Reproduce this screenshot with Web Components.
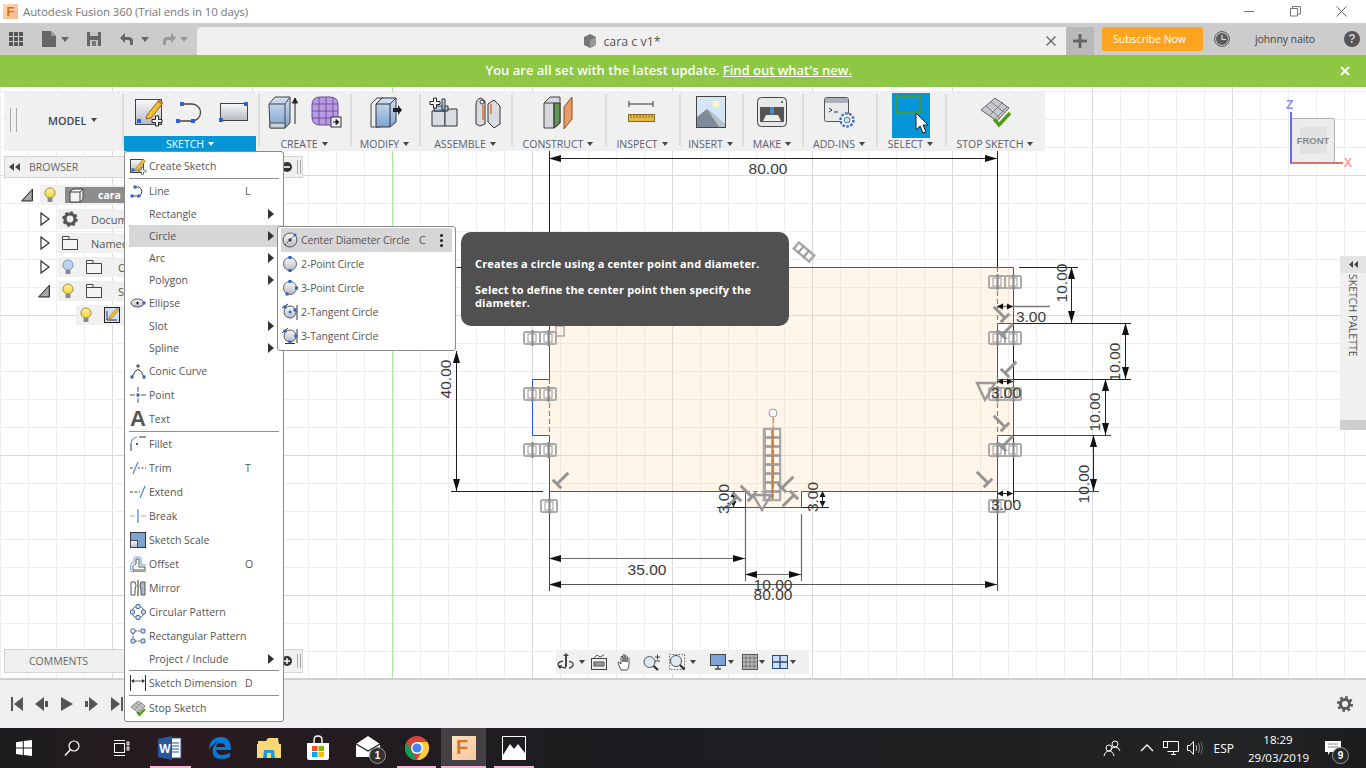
<!DOCTYPE html>
<html lang="en">
<head>
<meta charset="utf-8">
<title>Autodesk Fusion 360</title>
<style>
  html, body { margin: 0; padding: 0; background: #fff; }
</style>
</head>
<body>
<fus-app>
  <fus-titlebar></fus-titlebar>
  <fus-tabbar></fus-tabbar>
  <fus-banner>
    You are all set with the latest update. <a>Find out what's new.</a>
  </fus-banner>
  <fus-workspace>
    <fus-canvas></fus-canvas>
    <fus-toolbar>
      <fus-model-group></fus-model-group>
      <fus-tool-group label="SKETCH" w="136" active shift="4" gap="11" icons="t-sketch,t-line,t-rect"></fus-tool-group>
      <fus-tool-group label="CREATE" w="92" gap="11" icons="t-extrude,t-form"></fus-tool-group>
      <fus-tool-group label="MODIFY" w="69" icons="t-modify"></fus-tool-group>
      <fus-tool-group label="ASSEMBLE" w="92" icons="t-assemble,t-joint"></fus-tool-group>
      <fus-tool-group label="CONSTRUCT" w="94" icons="t-construct"></fus-tool-group>
      <fus-tool-group label="INSPECT" w="74" icons="t-inspect"></fus-tool-group>
      <fus-tool-group label="INSERT" w="63" icons="t-insert"></fus-tool-group>
      <fus-tool-group label="MAKE" w="60" icons="t-make"></fus-tool-group>
      <fus-tool-group label="ADD-INS" w="74" icons="t-addins"></fus-tool-group>
      <fus-tool-group label="SELECT" w="69" drop="7" icons="t-select"></fus-tool-group>
      <fus-tool-group label="STOP SKETCH" w="100" icons="t-stop"></fus-tool-group>
    </fus-toolbar>
    <fus-browser></fus-browser>
    <fus-panel-header class="comments" title-text="COMMENTS" sign="plus"></fus-panel-header>
    <fus-navbar></fus-navbar>
    <fus-viewcube></fus-viewcube>
    <fus-palette></fus-palette>
    <fus-menu class="main">
      <fus-menu-item icon="m-sketch" label="Create Sketch"></fus-menu-item>
      <fus-menu-sep></fus-menu-sep>
      <fus-menu-item icon="m-line" label="Line" key="L"></fus-menu-item>
      <fus-menu-item label="Rectangle" arrow></fus-menu-item>
      <fus-menu-item label="Circle" arrow active></fus-menu-item>
      <fus-menu-item label="Arc" arrow></fus-menu-item>
      <fus-menu-item label="Polygon" arrow></fus-menu-item>
      <fus-menu-item icon="m-ellipse" label="Ellipse" tall></fus-menu-item>
      <fus-menu-item label="Slot" arrow></fus-menu-item>
      <fus-menu-item label="Spline" arrow></fus-menu-item>
      <fus-menu-item icon="m-conic" label="Conic Curve"></fus-menu-item>
      <fus-menu-item icon="m-point" label="Point"></fus-menu-item>
      <fus-menu-item icon="m-text" label="Text"></fus-menu-item>
      <fus-menu-sep></fus-menu-sep>
      <fus-menu-item icon="m-fillet" label="Fillet"></fus-menu-item>
      <fus-menu-item icon="m-trim" label="Trim" key="T"></fus-menu-item>
      <fus-menu-item icon="m-extend" label="Extend"></fus-menu-item>
      <fus-menu-item icon="m-break" label="Break"></fus-menu-item>
      <fus-menu-item icon="m-scale" label="Sketch Scale"></fus-menu-item>
      <fus-menu-item icon="m-offset" label="Offset" key="O"></fus-menu-item>
      <fus-menu-item icon="m-mirror" label="Mirror"></fus-menu-item>
      <fus-menu-item icon="m-circ" label="Circular Pattern"></fus-menu-item>
      <fus-menu-item icon="m-rectp" label="Rectangular Pattern"></fus-menu-item>
      <fus-menu-item label="Project / Include" arrow></fus-menu-item>
      <fus-menu-sep></fus-menu-sep>
      <fus-menu-item icon="m-dim" label="Sketch Dimension" key="D"></fus-menu-item>
      <fus-menu-sep></fus-menu-sep>
      <fus-menu-item icon="m-stop" label="Stop Sketch"></fus-menu-item>
    </fus-menu>
    <fus-menu class="sub">
      <fus-menu-item sub icon="c-center" label="Center Diameter Circle" key="C" kebab active></fus-menu-item>
      <fus-menu-item sub icon="c-2pt" label="2-Point Circle"></fus-menu-item>
      <fus-menu-item sub icon="c-3pt" label="3-Point Circle"></fus-menu-item>
      <fus-menu-item sub icon="c-2tan" label="2-Tangent Circle"></fus-menu-item>
      <fus-menu-item sub icon="c-3tan" label="3-Tangent Circle"></fus-menu-item>
    </fus-menu>
    <fus-tooltip>
      <p>Creates a circle using a center point and diameter.</p>
      <p>Select to define the center point then specify the diameter.</p>
    </fus-tooltip>
  </fus-workspace>
  <fus-timeline></fus-timeline>
  <fus-taskbar></fus-taskbar>
</fus-app>

<script>
const FONT = '"Open Sans", "Noto Sans", "Liberation Sans", sans-serif';

const DEFS = `<defs>
<linearGradient id="b" x1="0" y1="0" x2="0" y2="1"><stop offset="0" stop-color="#d3e2f3"/><stop offset="1" stop-color="#7da2cf"/></linearGradient>
<linearGradient id="g" x1="0" y1="0" x2="0" y2="1"><stop offset="0" stop-color="#fafafa"/><stop offset="1" stop-color="#b4b9c2"/></linearGradient>
<linearGradient id="y" x1="0" y1="0" x2="0" y2="1"><stop offset="0" stop-color="#fff6a8"/><stop offset="1" stop-color="#f2cf3a"/></linearGradient>
</defs>`;

const sq = (x, y, s = 4) => `<rect x="${x - s / 2}" y="${y - s / 2}" width="${s}" height="${s}" fill="#2f62c9"/>`;
const plus = (x, y) => `<path d="M${x - 5} ${y - 1.5}h3.5v-3.5h3v3.5h3.5v3h-3.5v3.5h-3v-3.5h-3.5z" fill="#fff" stroke="#222"/>`;

// name: [viewBox width, viewBox height, markup]
const ICONS = {
  /* toolbar */
  't-sketch': [30, 30, `<rect x="1.5" y="2.5" width="26" height="25" fill="url(#g)" stroke="#444"/>
    <path d="M13 18 25 3l4 3-12 15-5 1z" fill="#f5bf2b" stroke="#8a6a20"/><path d="M25 3l4 3-1.5 2-4-3z" fill="#d9762a"/>
    ${sq(5, 24)}${plus(23, 24)}`],
  't-line': [32, 24, `<path d="M2 21H17A8.5 8.5 0 0 0 17 4H7" fill="none" stroke="#444" stroke-width="1.3"/>${sq(3, 21)}${sq(18, 21)}${sq(7, 4)}`],
  't-rect': [32, 24, `<rect x="2.5" y="3.5" width="27" height="17" fill="url(#g)" stroke="#444"/>${sq(28, 4)}${sq(3, 20)}`],
  't-extrude': [32, 34, `<path d="M2 9 8 2H23V28L18 33H3z" fill="url(#b)" stroke="#444"/><path d="M2 9H18V33M18 9 23 2" fill="none" stroke="#445"/><path d="M3 28H18V33H3z" fill="#cbd0d8" stroke="#555"/><path d="M28 29V4M25.5 8 28 3l2.5 5z" fill="#222" stroke="#222"/>`],
  't-form': [32, 34, `<path d="M2 10Q2 2 10 2H20Q28 2 28 10V24Q28 30 20 30H10Q2 30 2 22z" fill="#b99be0" stroke="#6b4a9e"/>
    <path d="M2 9H28M2 16H28M2 23H28M9 2V30M16 2V30M23 2V30" stroke="#6b4a9e" fill="none" stroke-width=".9"/>
    <rect x="21" y="22" width="10" height="10" fill="#eee" stroke="#333"/><path d="M23 27H27M26 24.5 29 27 26 29.5z" fill="#222" stroke="#222"/>`],
  't-modify': [32, 32, `<path d="M2 31V8L8 2H14L11 8V31z" fill="#eee" stroke="#444"/><path d="M7 31V8L13 2H27V26L21 31z" fill="url(#b)" stroke="#333"/><path d="M7 8H21V31M21 8 27 2" fill="none" stroke="#333"/><path d="M24 12H29V9L33 14 29 19V16H24z" fill="#222"/>`],
  't-assemble': [32, 32, `<path d="M4 15H17V30H4z" fill="#d9dde2" stroke="#333"/><path d="M17 13H29V30H17z" fill="#d9dde2" stroke="#333"/><path d="M6 10H20V15H6z" fill="url(#b)" stroke="#333"/><path d="M14 3H17V14H14z" fill="url(#b)" stroke="#333"/>${plus(7, 7)}`],
  't-joint': [30, 32, `<path d="M3 28V9Q3 3 8 2L12 5V28L7 30z" fill="#d8dbe0" stroke="#333"/><path d="M15 8 21 4 27 10V28L21 32 15 26z" fill="#d8dbe0" stroke="#333"/><path d="M10 9V24" stroke="#e8701d" stroke-width="1.5"/><path d="M18 8V18" stroke="#e8701d" stroke-width="1.5"/><circle cx="9" cy="6" r="2" fill="#fff" stroke="#333"/>`],
  't-construct': [32, 34, `<path d="M2 8 8 2H18V28L12 33H2z" fill="#d5d7db" stroke="#444"/><path d="M12 8H18V28L12 33z" fill="#5e9a52" stroke="#333"/><path d="M2 8H12V33" fill="none" stroke="#444"/><path d="M22 12 30 2V24L22 34z" fill="#ea9a67" stroke="#8a4a22"/>`],
  't-inspect': [32, 26, `<path d="M3 5H27M3 2V8M27 2V8" stroke="#333" fill="none"/><rect x="2.5" y="15.5" width="26" height="7" fill="#e9b949" stroke="#8a6a20"/><path d="M5 16v3M8 16v3M11 16v3M14 16v3M17 16v3M20 16v3M23 16v3M26 16v3" stroke="#8a6a20"/>`],
  't-insert': [32, 34, `<rect x="1.5" y="1.5" width="29" height="31" fill="#d2e6f5" stroke="#444"/><circle cx="21" cy="9" r="3.5" fill="#fff6c8"/><path d="M2 32V22L12 14 20 20 30 30V32z" fill="#7e8b96"/><path d="M12 14 24 32H30V29L20 20z" fill="#b9c0c6"/>`],
  't-make': [32, 32, `<rect x="1.5" y="1.5" width="29" height="29" rx="4" fill="#e6e7e8" stroke="#444"/><rect x="4" y="11" width="24" height="15" fill="#555"/><path d="M7 25 10 19H22L25 25z" fill="#eee"/><path d="M14 11H18V17L16 19 14 17z" fill="#4a86c8"/><rect x="25" y="5" width="2" height="2" fill="#2a9a3a"/>`],
  't-addins': [32, 32, `<rect x="1.5" y="1.5" width="24" height="24" rx="2" fill="#e8e9eb" stroke="#555"/><rect x="2" y="2" width="23" height="5" fill="#aab0b8"/><path d="M6 12l3 2-3 2M11 16h4" stroke="#333" fill="none"/><circle cx="24" cy="24" r="6.5" fill="#fff" stroke="#3f6eb5" stroke-width="2.4" stroke-dasharray="2.6 1.4"/><circle cx="24" cy="24" r="3" fill="#cfe0f2" stroke="#3f6eb5"/>`],
  't-select': [38, 45, `<rect width="38" height="45" fill="#0696d7"/><rect x="4" y="4" width="24" height="16" fill="none" stroke="#5a9a1a" stroke-width="1.4"/><path d="M24 20V37L28 33 31 40 34 39 31 32 36 32z" fill="#fff" stroke="#222"/>`],
  't-stop': [32, 32, `<path d="M2 14 16 2 30 12 18 25z" fill="#c6c8ce" stroke="#666"/><path d="M7 10 21 22M12 6 26 17M11 19 24 6M16 23 28 11" stroke="#777" fill="none" stroke-width=".9"/><path d="M15 23 20 29 31 17" fill="none" stroke="#4e9a12" stroke-width="3.4"/>`],

  /* menu, 16 x 16 */
  'm-sketch': [16, 16, `<rect x=".5" y="1.5" width="13" height="13" fill="url(#g)" stroke="#444"/><path d="M6 10 13 1l2.5 2-7 9-3 .5z" fill="#f5bf2b" stroke="#8a6a20" stroke-width=".6"/>${sq(3, 12, 3)}<path d="M9 12h2.5v-2.5h2V12H16v2h-2.5v2.5h-2V14H9z" fill="#fff" stroke="#333" stroke-width=".6"/>`],
  'm-line': [16, 16, `<path d="M1 13H9A5 5 0 0 0 9 4H5" fill="none" stroke="#444"/>${sq(2, 13, 3)}${sq(9, 13, 3)}${sq(5, 4, 3)}`],
  'm-ellipse': [16, 16, `<ellipse cx="7.5" cy="8" rx="6.5" ry="4" fill="url(#g)" stroke="#555"/><path d="M6 8h3M7.5 6.5v3" stroke="#222"/>${sq(14, 8, 3)}`],
  'm-conic': [16, 16, `<path d="M2 14Q8 -1 14 14" fill="none" stroke="#444"/><path d="M6 3h4M8 1v4" stroke="#333"/>${sq(2, 14, 3)}${sq(14, 14, 3)}`],
  'm-point': [16, 16, `<path d="M0 8h5M11 8h5M8 0v5M8 11v5" stroke="#555"/>${sq(8, 8, 3)}`],
  'm-fillet': [16, 16, `<path d="M1 15V8" stroke="#333"/><path d="M1 8Q1 2 7 1" fill="none" stroke="#5a8fe0" stroke-width="1.2"/><path d="M9 1h7" stroke="#333"/><path d="M6 8h2M7 7v2" stroke="#222"/>`],
  'm-trim': [16, 16, `<path d="M0 8h3" stroke="#444"/><path d="M3 14 8 2" stroke="#4a86e0" stroke-width="1.2"/><path d="M8 8h8" stroke="#444" stroke-dasharray="2 1.5"/>`],
  'm-extend': [16, 16, `<path d="M0 8h10" stroke="#444" stroke-dasharray="3 1.5"/><path d="M10 14 15 2" stroke="#4a86e0" stroke-width="1.2"/>`],
  'm-break': [16, 16, `<path d="M0 8h5M11 8h5" stroke="#aaa"/><path d="M8 1v14" stroke="#4a86e0" stroke-width="1.2"/>`],
  'm-scale': [16, 16, `<rect x=".5" y=".5" width="15" height="15" fill="#7fa3cf" stroke="#334"/><rect x=".5" y="8.5" width="7" height="7" fill="url(#g)" stroke="#445"/>`],
  'm-offset': [16, 16, `<path d="M3 14H15V11H9V3H6V8Q2 8 3 14z" fill="none" stroke="#555"/><path d="M1 15.5H16M1 15Q-1 7 4 6V3Q4 1 6 1H9Q11 1 11 3V9H16" fill="none" stroke="#6aa0ea"/>`],
  'm-mirror': [16, 16, `<path d="M1 2H5Q7 5 5 10L5 15H1z" fill="none" stroke="#555"/><path d="M8 0v16" stroke="#333"/><path d="M15 2H11Q9 5 11 10L11 15H15z" fill="#a9b9d2" stroke="#555"/>`],
  'm-circ': [16, 16, `<circle cx="8" cy="8" r="6" fill="none" stroke="#555"/><circle cx="8" cy="2.5" r="2.2" fill="#cfe0f2" stroke="#3a5f9e"/><circle cx="2.5" cy="8" r="2.2" fill="#cfe0f2" stroke="#3a5f9e"/><circle cx="13.5" cy="8" r="2.2" fill="#cfe0f2" stroke="#3a5f9e"/><circle cx="8" cy="13.5" r="2.2" fill="#cfe0f2" stroke="#3a5f9e"/>`],
  'm-rectp': [16, 16, `<path d="M5 3h6M5 13h6M3 5v6" stroke="#555" stroke-dasharray="2 1"/><rect x="1" y="1" width="4" height="4" rx="1" fill="#fff" stroke="#3a5f9e"/><rect x="11" y="1" width="4" height="4" rx="1" fill="#cfe0f2" stroke="#3a5f9e"/><rect x="1" y="11" width="4" height="4" rx="1" fill="#cfe0f2" stroke="#3a5f9e"/><rect x="11" y="11" width="4" height="4" rx="1" fill="#cfe0f2" stroke="#3a5f9e"/>`],
  'm-dim': [16, 16, `<path d="M.5 0v16M15.5 0v16" stroke="#333"/><path d="M2 6h12" stroke="#555"/><path d="M1 6l3-2v4zM15 6l-3-2v4z" fill="#333"/>`],
  'm-stop': [16, 16, `<path d="M1 7 8 1l7 5-6 7z" fill="#c6c8ce" stroke="#666" stroke-width=".8"/><path d="M4 5l7 6M6 3l7 5.5M5 9l6.5-6.5" stroke="#777" fill="none" stroke-width=".6"/><path d="M7 12l2.5 3L15 9" fill="none" stroke="#4e9a12" stroke-width="2"/>`],

  /* circle submenu */
  'c-center': [16, 16, `<circle cx="8" cy="8" r="7" fill="url(#g)" stroke="#555"/><path d="M6 8h4M8 6v4" stroke="#222"/><path d="M3 13 13 3" stroke="#333" stroke-dasharray="1.5 1.5"/>${sq(13, 3, 2.6)}`],
  'c-2pt': [16, 16, `<circle cx="8" cy="8" r="6.5" fill="url(#g)" stroke="#667"/>${sq(8, 1.5, 3)}${sq(8, 14.5, 3)}`],
  'c-3pt': [16, 16, `<circle cx="8" cy="8" r="6.5" fill="url(#g)" stroke="#667"/>${sq(8, 1.5, 3)}${sq(14.5, 8, 3)}${sq(5, 14, 3)}`],
  'c-2tan': [16, 16, `<circle cx="8" cy="8" r="6" fill="url(#g)" stroke="#555"/><path d="M15 1v15M0 4 6 0" stroke="#333"/>${sq(13, 6, 3)}${sq(3, 3, 3)}${sq(8, 8, 2.5)}`],
  'c-3tan': [16, 16, `<circle cx="8" cy="8" r="6" fill="url(#g)" stroke="#555"/><path d="M0 5 6 0M15 1v14M3 15.5h10" stroke="#333"/>${sq(3, 3, 3)}${sq(14, 8, 3)}${sq(8, 14, 3)}`],

  /* browser tree */
  'tri-open': [12, 14, `<path d="M11.5 1V13H.5z" fill="#888" stroke="#333"/><path d="M10 4V12H3z" fill="#aaa"/>`],
  'tri-closed': [10, 14, `<path d="M1 1 9 7 1 13z" fill="#fff" stroke="#333" stroke-width="1.2"/>`],
  'bulb-on': [12, 16, `<circle cx="6" cy="6" r="5" fill="url(#y)" stroke="#a58f2a"/><rect x="3.5" y="11" width="5" height="4" rx="1" fill="#888"/>`],
  'bulb-blue': [12, 16, `<circle cx="6" cy="6" r="5" fill="#bcd3f2" stroke="#7391c4"/><rect x="3.5" y="11" width="5" height="4" rx="1" fill="#888"/>`],
  'folder': [16, 14, `<path d="M.5 3.5V13.5H15.5V3.5H7V.5H.5z" fill="#f5f5f5" stroke="#444"/><path d="M.5 3.5H7" stroke="#444"/>`],
  'gear': [16, 16, `<circle cx="8" cy="8" r="5" fill="none" stroke="#555" stroke-width="3.2"/><circle cx="8" cy="8" r="6.6" fill="none" stroke="#555" stroke-width="2.4" stroke-dasharray="2.6 2.6"/>`],
  'cube': [15, 15, `<path d="M1 4 4 1H14V11L11 14H1z" fill="#f2f2f2" stroke="#444"/><path d="M1 4H11V14M11 4 14 1" fill="none" stroke="#444"/>`],
  'sketch-doc': [16, 16, `<rect x=".5" y=".5" width="15" height="15" fill="#cfe0f2" stroke="#222"/><path d="M3 13H13M3 13V4" stroke="#333"/><path d="M5 10 13 1l2 2-7 8-3 1z" fill="#f5bf2b" stroke="#8a6a20" stroke-width=".6"/>`],

  /* tab bar */
  'grid': [14, 14, `<path d="M0 0h4v4H0zM5 0h4v4H5zM10 0h4v4h-4zM0 5h4v4H0zM5 5h4v4H5zM10 5h4v4h-4zM0 10h4v4H0zM5 10h4v4H5zM10 10h4v4h-4z" fill="#555"/>`],
  'doc': [14, 16, `<path d="M0 0H9L14 5V16H0z" fill="#666"/><path d="M9 0V5H14z" fill="#999"/>`],
  'save': [14, 14, `<path d="M0 0H14V14H0z" fill="#666"/><path d="M3 0H11V4H3z" fill="#c4c4c4"/><path d="M3 8H11V14H3z" fill="#c4c4c4"/><path d="M5 9H9V14H5z" fill="#777"/>`],
  'undo': [15, 14, `<path d="M13 13V9Q13 5 8 5H5V1L0 6 5 11V8H8Q10 8 10 10V13z" fill="#666"/>`],
  'redo': [15, 14, `<path d="M2 13V9Q2 5 7 5H10V1L15 6 10 11V8H7Q5 8 5 10V13z" fill="#999"/>`],
  'tabcube': [14, 14, `<path d="M1 3 7 0 13 3V11L7 14 1 11z" fill="#777"/><path d="M7 6 13 3V11L7 14z" fill="#999"/>`],
  'clock': [16, 16, `<circle cx="8" cy="8" r="7.4" fill="#ccc" stroke="#555"/><circle cx="8" cy="8" r="6" fill="#5c5c5c"/><path d="M8 4V8.5H12" fill="none" stroke="#ddd" stroke-width="1.2"/>`],

  /* nav bar */
  'n-orbit': [16, 18, `<path d="M8 0 5 3H7V14H9V3H11z" fill="#444"/><path d="M5 8Q0 9 0 11.5T8 15M11 8.5Q16 9 15 12T11 15" fill="none" stroke="#444" stroke-width="1.3"/><path d="M0 13l4-1-2 4z" fill="#222"/>`],
  'n-look': [16, 16, `<rect x=".5" y="4.5" width="15" height="11" fill="#eee" stroke="#444"/><rect x="3" y="8" width="10" height="4" fill="#999" stroke="#555"/><path d="M3 4 6 1 9 3 13 1" fill="none" stroke="#555"/>`],
  'n-hand': [16, 17, `<path d="M4 16 1 9Q1 7 3 9L4 10V3Q5 1 6 3V8 1Q7.5 0 8 1V8 2Q9.5 1 10 2.5V8 4Q11.5 3 12 4.5V10Q12 15 10 16z" fill="#fff" stroke="#444" stroke-width=".9"/>`],
  'n-zoom': [18, 16, `<circle cx="6.5" cy="8" r="5.5" fill="#dfe9f2" stroke="#555"/><path d="M10.5 12 15 16" stroke="#222" stroke-width="2"/><path d="M12 3h5M14.5 .5v5M12 7h5" stroke="#444"/>`],
  'n-fit': [16, 16, `<rect x=".5" y=".5" width="15" height="15" fill="none" stroke="#666" stroke-dasharray="1.5 1.5"/><circle cx="7" cy="7" r="5.5" fill="#dfe9f2" stroke="#555"/><path d="M11 11 15.5 15.5" stroke="#222" stroke-width="2"/>`],
  'n-display': [16, 16, `<rect x=".5" y=".5" width="15" height="11" fill="#7fa3d6" stroke="#444"/><path d="M5 15h6M8 12v3" stroke="#444" stroke-width="1.4"/>`],
  'n-grid': [16, 16, `<rect x=".5" y=".5" width="15" height="15" fill="#bbb" stroke="#555"/><path d="M4 0v16M8 0v16M12 0v16M0 4h16M0 8h16M0 12h16" stroke="#666" stroke-width=".8"/>`],
  'n-views': [16, 14, `<rect x=".5" y=".5" width="15" height="13" fill="#cfe0f2" stroke="#2a4d80"/><path d="M8 0v14M0 7h16" stroke="#2a4d80" stroke-width="1.4"/>`],

  /* timeline */
  'tl-first': [12, 14, `<path d="M0 0h2v14H0zM12 0v14L3 7z" fill="#555"/>`],
  'tl-prev': [13, 14, `<path d="M9 0v14L0 7zM10 4h3v6h-3z" fill="#555"/>`],
  'tl-play': [12, 14, `<path d="M0 0v14L12 7z" fill="#555"/>`],
  'tl-next': [13, 14, `<path d="M4 0v14L13 7zM0 4h3v6H0z" fill="#555"/>`],
  'tl-last': [12, 14, `<path d="M12 0h-2v14h2zM0 0v14L9 7z" fill="#555"/>`],
  'cog': [16, 16, `<circle cx="8" cy="8" r="4.6" fill="none" stroke="#5a5a5a" stroke-width="3"/><circle cx="8" cy="8" r="6.7" fill="none" stroke="#5a5a5a" stroke-width="2.6" stroke-dasharray="2.6 2.66"/>`],

  /* taskbar */
  'w-windows': [16, 16, `<path d="M0 2.2 6.8 1.2V7.6H0zM7.8 1 16 0V7.6H7.8zM0 8.6H6.8V15L0 14zM7.8 8.6H16V16L7.8 15z" fill="#fff"/>`],
  'w-search': [16, 16, `<circle cx="10" cy="6" r="5" fill="none" stroke="#fff" stroke-width="1.2"/><path d="M6.5 9.5 1 15.5" stroke="#fff" stroke-width="1.4"/>`],
  'w-task': [16, 16, `<rect x="1.5" y="3.5" width="10" height="9" fill="none" stroke="#fff"/><path d="M1 .5h11M1 15.5h11M14 2h2v3h-2zM14 7h2v3h-2z" stroke="#fff" fill="none"/>`],
  'w-word': [24, 24, `<rect x="9" y="2" width="14" height="20" fill="#fff" stroke="#2b579a"/><path d="M14 7h7M14 10h7M14 13h7M14 16h7" stroke="#2b579a"/><path d="M0 3 14 0V24L0 21z" fill="#2b579a"/><text x="7" y="16.5" font-family="Liberation Sans" font-size="12" font-weight="700" fill="#fff" text-anchor="middle">W</text>`],
  'w-edge': [24, 24, `<path d="M1 13Q2 1 13 1 23 1 23 14H8Q9 19 14 19 18 19 22 17V21Q18 23 13 23 3 23 5 12 7 6 14 5 10 5 6 8 3 10 1 13zM8 11H17Q17 7 13 7 9 7 8 11z" fill="#0a78d7"/>`],
  'w-files': [24, 24, `<path d="M1 5H9L11 2H21L22 8H1z" fill="#f7d774"/><path d="M0 8H24V22H0z" fill="#f8d775"/><path d="M7 14H17L18 22H6z" fill="#1d9bd8"/><rect x="10" y="17" width="4" height="5" fill="#f8d775"/>`],
  'w-store': [24, 24, `<path d="M1 7H23V22Q23 24 21 24H3Q1 24 1 22z" fill="#fff"/><path d="M8 7V4Q8 0 12 0T16 4V7" fill="none" stroke="#fff" stroke-width="1.4"/><rect x="6" y="10" width="5.5" height="5" fill="#f25022"/><rect x="12.5" y="10" width="5.5" height="5" fill="#7fba00"/><rect x="6" y="16" width="5.5" height="5" fill="#00a4ef"/><rect x="12.5" y="16" width="5.5" height="5" fill="#ffb900"/>`],
  'w-mail': [24, 24, `<path d="M0 8 12 0 24 8V21H0z" fill="#fff"/><path d="M0 8 12 15 24 8" fill="none" stroke="#222" stroke-width="1.4"/>`],
  'w-chrome': [24, 24, `<circle cx="12" cy="12" r="12" fill="#db4437"/><path d="M12 24A12 12 0 0 1 1.6 6L7 15.5 12 24z" fill="#0f9d58"/><path d="M12 24A12 12 0 0 0 22.4 6H12l5 9z" fill="#ffcd40"/><circle cx="12" cy="12" r="6" fill="#fff"/><circle cx="12" cy="12" r="4.6" fill="#4285f4"/>`],
  'w-fusion': [24, 24, `<defs><linearGradient id="o" x1="0" y1="0" x2="1" y2="1"><stop offset="0" stop-color="#fce0c4"/><stop offset="1" stop-color="#f8c79b"/></linearGradient></defs><rect width="24" height="24" fill="url(#o)"/><text x="10" y="18" font-family="Liberation Sans" font-size="20" font-weight="700" fill="#d9771e" text-anchor="middle">F</text>`],
  'w-photos': [24, 24, `<rect x=".5" y=".5" width="23" height="23" fill="none" stroke="#fff"/><path d="M1 19 8 8 12 13 16 8 23 17V23H1z" fill="#fff"/>`],
  't-people': [16, 16, `<circle cx="11" cy="4" r="3" fill="none" stroke="#fff"/><path d="M6 11Q7 7 11 7T16 11" fill="none" stroke="#fff"/><circle cx="5" cy="8" r="3" fill="none" stroke="#fff"/><path d="M0 16Q1 11 5 11T10 16" fill="none" stroke="#fff"/>`],
  't-chev': [14, 8, `<path d="M1 7 7 1l6 6" fill="none" stroke="#fff" stroke-width="1.3"/>`],
  't-net': [16, 14, `<path d="M4.5 .5H15.5V10.5H4.5" fill="none" stroke="#fff"/><path d="M8 13.5h5M10.5 11v3" stroke="#fff"/><rect x=".5" y=".5" width="4" height="6" fill="#222" stroke="#fff"/>`],
  't-vol': [16, 14, `<path d="M.5 4.5H3L6.5 .5V13.5L3 9.5H.5z" fill="none" stroke="#fff"/><path d="M9 4Q10.5 7 9 10" fill="none" stroke="#bbb"/><path d="M11.5 2Q14 7 11.5 12" fill="none" stroke="#888"/><path d="M14 .5Q17 7 14 13.5" fill="none" stroke="#666"/>`],
  't-note': [16, 14, `<path d="M0 0H16V11H5L3 14V11H0z" fill="#fff"/><path d="M3 3h10M3 6h10" stroke="#888"/>`]
};

function iconSvg(name, scale = 1) {
  const [w, h, body] = ICONS[name];
  return `<svg width="${w * scale}" height="${h * scale}" viewBox="0 0 ${w} ${h}" style="display:block;flex:none;overflow:visible">${DEFS}${body}</svg>`;
}

class Comp extends HTMLElement {
  constructor() {
    super();
    this.attachShadow({ mode: 'open' });
  }

  connectedCallback() {
    this.shadowRoot.innerHTML = this.markup();
  }
}

class FusApp extends Comp {
  markup() {
    return `<style>
      :host { display: flex; flex-direction: column; width: 1366px; height: 768px; overflow: hidden; position: relative; font-family: ${FONT}; }
    </style><slot></slot>`;
  }
}

class FusTitlebar extends Comp {
  markup() {
    return `<style>
      :host { display: flex; align-items: center; height: 23px; flex: none; background: #fff; }
      .logo { width: 15px; height: 15px; margin-left: 3px; background: linear-gradient(135deg, #fbd9b8, #f7b888); color: #d96f15; font: 700 13px/15px "Liberation Sans", sans-serif; text-align: center; }
      .name { margin-left: 5px; font-size: 11.5px; color: #777; letter-spacing: -.12px; }
      .win { margin-left: auto; margin-right: 2px; display: flex; }
      .win svg { display: block; }
      .btn { width: 46px; height: 23px; display: flex; align-items: center; justify-content: center; }
    </style>
    <div class="logo">F</div><div class="name">Autodesk Fusion 360 (Trial ends in 10 days)</div>
    <div class="win">
      <div class="btn"><svg width="11" height="11"><path d="M0 5.5h10" stroke="#777"/></svg></div>
      <div class="btn"><svg width="11" height="11"><path d="M.5 2.5h7v7.5h-7zM2.5 2.5V.5h8v7.5H7.5" fill="none" stroke="#777"/></svg></div>
      <div class="btn"><svg width="11" height="11"><path d="M.5.5l10 10M10.5.5l-10 10" stroke="#666"/></svg></div>
    </div>`;
  }
}

class FusTabbar extends Comp {
  markup() {
    const caret = (ml, c = '#666') => `<i style="margin-left:${ml}px;border-top-color:${c}"></i>`;
    const ic = (n, ml) => `<span style="margin-left:${ml}px">${iconSvg(n)}</span>`;
    return `<style>
      :host { display: flex; align-items: center; height: 32px; flex: none; background: #ccc; position: relative; padding-left: 9px; box-sizing: border-box; }
      i { display: block; width: 0; height: 0; border: 4px solid transparent; border-bottom: 0; border-top: 5px solid #666; }
      span { display: block; }
      .tab { flex: none; align-self: flex-end; margin-left: 9px; width: 869px; height: 28px; background: #f0f0f0; border-radius: 5px 0 0 0; display: flex; align-items: center; justify-content: center; padding-right: 19px; box-sizing: border-box; position: relative; font-size: 12.4px; color: #555; gap: 6px; }
      .x { position: absolute; right: 10px; top: 9px; }
      .new { flex: none; align-self: flex-end; width: 28px; height: 28px; background: #b9b9b9; border-radius: 3px 3px 0 0; display: flex; align-items: center; justify-content: center; }
      .sub { flex: none; margin-left: 8px; width: 101px; height: 24px; padding-right: 6px; box-sizing: border-box; background: #fca41d; border-radius: 3px; color: #fff; font-size: 10.5px; display: flex; align-items: center; justify-content: center; }
      .user { flex: none; margin-left: 25px; margin-top: -1px; font-size: 10.5px; letter-spacing: -.1px; color: #444; width: 60px; white-space: nowrap; }
      .help { flex: none; margin-left: 29px; width: 16px; height: 16px; border-radius: 50%; background: #555; color: #ccc; font: 700 12px/16px "Liberation Sans", sans-serif; text-align: center; }
    </style>
    ${ic('grid', 0)}${ic('doc', 19)}${caret(5)}${ic('save', 18)}${ic('undo', 19)}${caret(6)}${ic('redo', 12)}${caret(4, '#999')}
    <div class="tab">${iconSvg('tabcube')}<div>cara c v1*</div>
      <svg class="x" width="10" height="10"><path d="M.5.5l9 9M9.5.5l-9 9" stroke="#666" stroke-width="1.4"/></svg></div>
    <div class="new"><svg width="14" height="14"><path d="M5.5 0h3v5.5H14v3H8.5V14h-3V8.5H0v-3h5.5z" fill="#666"/></svg></div>
    <div class="sub">Subscribe Now</div>
    <span style="margin-left:11px">${iconSvg('clock')}</span>
    <div class="user">johnny naito</div>
    <div class="help">?</div>`;
  }
}

class FusBanner extends Comp {
  markup() {
    return `<style>
      :host { display: flex; align-items: center; justify-content: center; height: 32px; flex: none; background: #8dc743; color: #fff; font-weight: 600; font-size: 13px; position: relative; padding-right: 42px; padding-bottom: 2px; box-sizing: border-box; }
      ::slotted(a) { text-decoration: underline; }
      svg { position: absolute; right: 16px; top: 11px; }
      .t { white-space: pre; }
    </style><div class="t"><slot></slot></div>
    <svg width="10" height="10"><path d="M1 1l8 8M9 1l-8 8" stroke="#fff" stroke-width="2"/></svg>`;
  }
}

class FusWorkspace extends Comp {
  markup() {
    return `<style>
      :host { display: block; flex: none; height: 591px; position: relative; z-index: 2; }
    </style><slot></slot>`;
  }
}

class FusCanvas extends Comp {
  markup() {
    let g = '';
    const L = (x1, y1, x2, y2, c = '#222', w = 1) => `<path d="M${x1} ${y1}L${x2} ${y2}" stroke="${c}" stroke-width="${w}" fill="none"/>`;
    for (let x = 0; x < 1366; x += 28) {
      g += L(x + .5, 87, x + .5, 679, (x - 392) % 140 === 0 ? '#dadada' : '#eeeeee');
    }
    for (let y = 91; y < 679; y += 28) {
      g += L(0, y + .5, 1366, y + .5, (y - 315) % 140 === 0 ? '#dadada' : '#eeeeee');
    }
    g += L(392.5, 87, 392.5, 679, '#a8e89a', 1.2);

    const shape = 'M549.5 267.5H1013.5V323.5H997.5V379.5H1013.5V435.5H997.5V491.5H801.5V507.5H745.5V491.5H549.5V435.5H532.5V379.5H549.5Z';
    g += `<path d="${shape}" fill="#ffcf90" fill-opacity=".2"/>`;

    // extension lines
    const ext = [
      [549.5, 151, 549.5, 267], [997.5, 151, 997.5, 267],
      [549.5, 491, 549.5, 591, '#444'], [997.5, 491, 997.5, 591, '#444'],
      [745.5, 507, 745.5, 581, '#666', 1.2], [801.5, 514, 801.5, 581, '#666', 1.2],
      [1019, 267.5, 1078, 267.5], [1013, 323.5, 1131, 323.5], [1013, 379.5, 1131, 379.5],
      [1013, 435.5, 1111, 435.5, '#444'], [1013, 491.5, 1099, 491.5, '#444'],
      [451, 491.5, 543, 491.5], [456.5, 267.5, 549, 267.5],
      [717, 507.5, 745, 507.5], [801, 507.5, 829, 507.5]
    ];
    ext.forEach(a => { g += L(...a); });

    g += `<path d="${shape}" fill="none" stroke="#1f5ae6" stroke-width="1"/>`;
    g += L(1013.5, 323, 1013.5, 379) + L(1013.5, 435, 1013.5, 503);
    g += `<path d="M997.5 267V323M997.5 379V435M549.5 379V435M745 491.5H801M773.5 418V490" stroke="#d2701e" stroke-width="1.2" fill="none" stroke-dasharray="5 3"/>`;

    // dimensions with arrowheads pointing at their ends
    const hdim = (x1, x2, y, c = '#222') => L(x1, y + .5, x2, y + .5, c) +
      `<path d="M${x1} ${y + .5}l12 -3.5v7zM${x2} ${y + .5}l-12 -3.5v7z" fill="#111"/>`;
    const vdim = (x, y1, y2, c = '#222') => L(x + .5, y1, x + .5, y2, c) +
      `<path d="M${x + .5} ${y1}l-3.5 12h7zM${x + .5} ${y2}l-3.5 -12h7z" fill="#111"/>`;
    g += hdim(549, 997, 158) + hdim(549, 745, 558, '#666') + hdim(745, 801, 574, '#666') + hdim(549, 997, 584, '#555');
    g += vdim(456, 351, 491) + vdim(1071, 267, 323) + vdim(1125, 323, 379) + vdim(1105, 379, 435) + vdim(1093, 435, 491);
    // short 3.00 dimensions
    const tiny = (x, y, horiz) => horiz
      ? `<path d="M${x - 8} ${y + .5}l6 -3v6zM${x + 8} ${y + .5}l-6 -3v6z" fill="#111"/>`
      : `<path d="M${x + .5} ${y - 8}l-3 6h6zM${x + .5} ${y + 8}l-3 -6h6z" fill="#111"/>`;
    g += L(997, 306.5, 1050, 306.5, '#777', 1.4) + tiny(1005, 306, true) + tiny(1005, 381, true) + tiny(1005, 493, true);
    g += L(997, 493.5, 1013, 493.5) + L(997, 381.5, 1013, 381.5);
    g += tiny(733, 499, false) + tiny(822, 499, false);
    g += L(733.5, 491, 733.5, 507) + L(822.5, 491, 822.5, 507);

    // constraint glyphs
    const link = (x, y) => `<g fill="none"><rect x="${x - 8}" y="${y - 6}" width="16" height="12" rx="1.5" stroke="#aaa" stroke-width="2"/><rect x="${x - 4}" y="${y - 4}" width="8" height="8" fill="#fff" fill-opacity=".5" stroke="#999"/></g><path d="M${x + .5} ${y - 8}V${y + 8}" stroke="#888" stroke-width="2"/>`;
    const pair = (x, y) => link(x, y) + link(x + 16, y);
    const tee = (x, y, r) => `<g transform="translate(${x} ${y}) rotate(${r})" fill="none" stroke="#949494" stroke-width="3"><path d="M-6 0H6M0 0V-16"/></g>`;
    [338, 394, 450].forEach(y => { g += pair(532, y); });
    [282, 338, 394, 450].forEach(y => { g += pair(997, y); });
    g += link(549, 506) + link(997, 506);
    for (let y = 433; y < 500; y += 9) {
      g += `<rect x="765" y="${y - 4}" width="7" height="8" fill="none" stroke="#999" stroke-width="1.6"/><rect x="773" y="${y - 4}" width="7" height="8" fill="none" stroke="#999" stroke-width="1.6"/>`;
    }
    g += `<rect x="763.5" y="428.5" width="17" height="72" fill="none" stroke="#aaa" stroke-width="1.6"/><path d="M772.5 430V500" stroke="#d2701e" stroke-dasharray="3 2"/>`;
    g += `<circle cx="773" cy="413" r="4" fill="#fff" stroke="#999"/><path d="M773 417V428" stroke="#e8a060"/>`;
    g += tee(557, 484, 45) + tee(1005, 318, -45) + tee(1005, 373, 45) + tee(1005, 427, -45) + tee(988, 483, -45);
    g += tee(1002, 335, 45) + tee(1002, 447, 45) + tee(794, 495, -135) + tee(782, 488, 45) + tee(737, 497, -135) + tee(752, 497, -45);
    g += `<path d="M977 383H995L985 400z" fill="none" stroke="#999" stroke-width="2.4"/><path d="M753 495H771L762 510z" fill="none" stroke="#999" stroke-width="2.4"/>`;
    g += `<g transform="translate(804 252) rotate(40)"><rect x="-10" y="-4" width="20" height="8" fill="none" stroke="#aaa" stroke-width="2.6"/><path d="M-4 -5V5M3 -5V5" stroke="#999" stroke-width="2"/></g>`;
    g += `<rect x="556" y="326" width="8" height="10" fill="none" stroke="#aaa" stroke-width="1.5"/>`;

    // dimension values
    const T = (s, x, y, rot) => rot
      ? `<text transform="translate(${x} ${y}) rotate(-90)" text-anchor="middle">${s}</text>`
      : `<text x="${x}" y="${y}" text-anchor="middle">${s}</text>`;
    g += `<g font-family="'Liberation Sans', sans-serif" font-size="15.5" fill="#3c3c3c">`;
    g += T('80.00', 768, 174) + T('35.00', 647, 575) + T('10.00', 773, 590) + T('80.00', 773, 600);
    g += T('40.00', 451, 379, true) + T('10.00', 1067, 283, true) + T('10.00', 1120, 362, true) + T('10.00', 1100, 412, true) + T('10.00', 1089, 484, true);
    g += T('3.00', 1031, 322) + T('3.00', 1006, 398) + T('3.00', 1006, 510);
    g += T('3.00', 729, 499, true) + T('3.00', 818, 497, true);
    g += `</g>`;

    return `<style>
      :host { display: block; position: absolute; left: 0; top: 0; }
      svg { display: block; }
    </style><svg width="1366" height="591" viewBox="0 87 1366 591">${g}</svg>`;
  }
}

class FusToolbar extends Comp {
  markup() {
    return `<style>
      :host { display: flex; position: absolute; left: 4px; top: 5px; width: 1041px; height: 59px; background: #f0f0f0; }
    </style><slot></slot>`;
  }
}

class FusModelGroup extends Comp {
  markup() {
    return `<style>
      :host { display: flex; align-items: center; width: 118px; height: 59px; flex: none; box-sizing: border-box; padding-left: 6px; padding-bottom: 3px; }
      .h { width: 5px; height: 24px; border-left: 1px solid #aaa; border-right: 1px solid #aaa; }
      .m { margin-left: 31px; font-size: 10.8px; font-weight: 600; color: #3c4654; }
      i { display: block; margin-left: 5px; width: 0; height: 0; border: 3px solid transparent; border-bottom: 0; border-top: 4px solid #444; }
    </style><div class="h"></div><div class="m">MODEL</div><i></i>`;
  }
}

class FusToolGroup extends Comp {
  markup() {
    const names = this.getAttribute('icons').split(',');
    const gap = this.getAttribute('gap') || 13;
    const shift = this.getAttribute('shift') || 0;
    const drop = this.getAttribute('drop') || 0;
    return `<style>
      :host { display: flex; flex-direction: column; flex: none; box-sizing: border-box; padding-left: 2px; width: ${this.getAttribute('w')}px; height: 59px;
        background: linear-gradient(#dcdcdc, #dcdcdc) 0 2px / 2px 52px no-repeat; }
      .icons { height: 40px; flex: none; box-sizing: border-box; display: flex; align-items: center; justify-content: center; gap: ${gap}px; margin-right: 2px; padding-left: ${shift}px; padding-top: ${drop}px; margin-bottom: 4px; }
      .label { height: 15px; flex: none; margin-right: 2px; display: flex; align-items: center; justify-content: center; font-size: 10.5px; color: #566070; white-space: nowrap; }
      .label::after { content: ''; margin-left: 4px; width: 0; height: 0; border: 3.5px solid transparent; border-bottom: 0; border-top: 4px solid #444; }
      :host([active]) .label { background: #0696d7; color: #fff; }
      :host([active]) .label::after { border-top-color: #fff; }
    </style><div class="icons">${names.map(n => iconSvg(n)).join('')}</div>
    <div class="label">${this.getAttribute('label')}</div>`;
  }
}

class FusPanelHeader extends Comp {
  markup() {
    const sign = this.getAttribute('sign') === 'plus' ? 'M-3 -.7H-.7V-3H.7V-.7H3V.7H.7V3H-.7V.7H-3z' : 'M-3 -.8H3V.8H-3z';
    const arrows = this.getAttribute('title-text') === 'BROWSER'
      ? `<svg class="ar" width="11" height="8"><path d="M5 0v8L0 4zM11 0v8L6 4z" fill="#444"/></svg>` : `<div class="ar" style="width:11px"></div>`;
    return `<style>
      :host { display: flex; align-items: center; width: 299px; height: 22px; box-sizing: border-box; background: #f0f0f0; border: 1px solid #d4d4d4; font-size: 10.5px; color: #666; }
      :host(.comments) { position: absolute; left: 4px; top: 562px; height: 24px; }
      .ar { margin-left: 4px; }
      .t { margin-left: 9px; }
      .s { margin-left: auto; margin-right: 5px; }
      .h { width: 2px; height: 14px; border-left: 1px solid #aaa; border-right: 1px solid #aaa; margin-right: 1px; }
    </style>${arrows}<div class="t">${this.getAttribute('title-text')}</div>
    <svg class="s" width="10" height="10" viewBox="-5 -5 10 10"><circle r="5" fill="#333"/><path d="${sign}" fill="#fff"/></svg>
    <div class="h"></div>`;
  }
}

class FusBrowser extends Comp {
  markup() {
    const row = (col, tri, pad, inner) => `<div class="row"><div class="tw" style="width:${col}px;padding-right:${pad}px">${tri ? iconSvg(tri) : ''}</div><div class="body">${inner}</div></div>`;
    const lbl = (s, ml) => `<span class="lbl" style="margin-left:${ml}px">${s}</span>`;
    return `<style>
      :host { display: block; position: absolute; left: 4px; top: 69px; width: 299px; }
      .tree { padding-top: 7px; display: flex; flex-direction: column; gap: 4px; width: 121px; }
      .row { display: flex; height: 20px; }
      .tw { flex: none; box-sizing: border-box; display: flex; align-items: center; justify-content: flex-end; }
      .body { flex: 1; background: #f0f0f0; display: flex; align-items: center; padding-left: 4px; }
      .lbl { font-size: 11px; color: #555; white-space: nowrap; }
      .pill { margin-left: 9px; flex: 1; height: 16px; background: #8c8c8c; display: flex; align-items: center; padding-left: 4px; color: #fff; font-weight: 700; font-size: 10.5px; }
      .pill span { margin-left: 14px; }
    </style>
    <fus-panel-header title-text="BROWSER" sign="minus"></fus-panel-header>
    <div class="tree">
      ${row(36, 'tri-open', 7, `${iconSvg('bulb-on')}<div class="pill">${iconSvg('cube')}<span>cara</span></div>`)}
      ${row(54, 'tri-closed', 8, `${iconSvg('gear')}${lbl('Docum', 13)}`)}
      ${row(54, 'tri-closed', 8, `<span style="width:0"></span>${iconSvg('folder')}${lbl('Named', 13)}`)}
      ${row(54, 'tri-closed', 8, `${iconSvg('bulb-blue')}<span style="margin-left:12px">${iconSvg('folder')}</span>${lbl('O', 16)}`)}
      ${row(54, 'tri-open', 8, `${iconSvg('bulb-on')}<span style="margin-left:12px">${iconSvg('folder')}</span>${lbl('S', 16)}`)}
      ${row(72, null, 0, `${iconSvg('bulb-on')}<span style="margin-left:12px">${iconSvg('sketch-doc')}</span>`)}
    </div>`;
  }
}

class FusMenu extends Comp {
  markup() {
    return `<style>
      :host { display: block; position: absolute; box-sizing: border-box; background: #fff; border: 1px solid #8a8a8a; border-radius: 3px; }
      :host(.main) { left: 124px; top: 64px; width: 160px; height: 571px; padding: 2px 4px; }
      :host(.sub) { left: 277px; top: 139px; width: 179px; height: 125px; padding: 1px 3px; }
    </style><slot></slot>`;
  }
}

class FusMenuSep extends Comp {
  markup() {
    return `<style>:host { display: block; height: 1px; background: #8f8f8f; width: 150px; }</style>`;
  }
}

class FusMenuItem extends Comp {
  markup() {
    const icon = this.getAttribute('icon');
    const has = a => this.hasAttribute(a);
    let ic = '';
    if (icon === 'm-text') {
      ic = `<div class="big">A</div>`;
    } else if (icon) {
      ic = iconSvg(icon);
    }
    const key = this.getAttribute('key');
    const sub = has('sub');
    return `<style>
      :host { display: flex; align-items: center; box-sizing: border-box; height: ${icon ? 24 : 22}px; font-size: 10.5px; color: #555; position: relative; white-space: nowrap; }
      :host([active]) { background: #d6d6d6; }
      :host([active]:not([sub])) { margin-right: -4px; }
      .ic { flex: none; width: ${sub ? 18 : 20}px; display: flex; align-items: center; padding-left: 1px; box-sizing: border-box; }
      .big { font: 700 22px/22px "Liberation Sans", sans-serif; color: #555; margin-top: -1px; }
      .lbl { flex: none; ${sub ? 'margin-left: 2px; letter-spacing: -.12px;' : ''} }
      .key { position: absolute; left: ${sub ? 138 : 116}px; }
      .arr { position: absolute; left: 139px; width: 0; height: 0; border: 5px solid transparent; border-right: 0; border-left: 6px solid #333; }
      .keb { position: absolute; left: 159px; width: 3px; height: 3px; border-radius: 50%; background: #222; box-shadow: 0 -5px 0 #222, 0 5px 0 #222; }
    </style><div class="ic">${ic}</div><div class="lbl">${this.getAttribute('label')}</div>
    ${key ? `<div class="key">${key}</div>` : ''}
    ${has('arrow') ? '<div class="arr"></div>' : ''}
    ${has('kebab') ? '<div class="keb"></div>' : ''}`;
  }
}

class FusTooltip extends Comp {
  markup() {
    return `<style>
      :host { display: block; position: absolute; left: 461px; top: 145px; width: 328px; height: 94px; box-sizing: border-box; padding: 25px 14px 0; background: #505050; border-radius: 10px; color: #fff; font-size: 11px; font-weight: 700; line-height: 13px; letter-spacing: .16px; }
      ::slotted(p) { margin: 0 0 13px; }
    </style><slot></slot>`;
  }
}

class FusNavbar extends Comp {
  markup() {
    const cell = (n, ml) => `<span style="margin-left:${ml}px">${iconSvg(n)}</span>`;
    const car = ml => `<i style="margin-left:${ml}px"></i>`;
    return `<style>
      :host { display: flex; align-items: center; position: absolute; left: 556px; top: 563px; width: 253px; height: 24px; background: #f0f0f0; padding-left: 2px; box-sizing: border-box; }
      span { display: block; }
      i { display: block; width: 0; height: 0; border: 3.5px solid transparent; border-bottom: 0; border-top: 4px solid #444; }
    </style>${cell('n-orbit', 0)}${car(5)}${cell('n-look', 6)}${cell('n-hand', 10)}${cell('n-zoom', 10)}${cell('n-fit', 8)}${car(5)}${cell('n-display', 14)}${car(2)}${cell('n-grid', 8)}${car(1)}${cell('n-views', 7)}${car(2)}`;
  }
}

class FusViewcube extends Comp {
  markup() {
    return `<style>
      :host { display: block; position: absolute; left: 1280px; top: 10px; width: 80px; height: 80px; font-family: "Liberation Sans", sans-serif; }
      .face { position: absolute; left: 11px; top: 21px; width: 44px; height: 45px; box-sizing: border-box; background: #ececec; border: 1px solid #b0b0b0; border-radius: 2px; display: flex; align-items: center; justify-content: center; }
      .in { width: 27px; height: 27px; background: #e2e2e2; display: flex; align-items: center; justify-content: center; font: 700 9.5px "Liberation Sans", sans-serif; color: #8a8a8a; }
      .z, .x { position: absolute; font-size: 12px; font-weight: 700; line-height: 12px; }
      .z { left: 6px; top: 2px; color: #8a8aff; }
      .x { left: 64px; top: 60px; color: #ff9a9a; }
      .ax { position: absolute; }
      .az { left: 10px; top: 15px; width: 2px; height: 52px; background: #6a6af5; }
      .ax2 { left: 11px; top: 65px; width: 52px; height: 2px; background: #e07070; }
    </style><div class="face"><div class="in">FRONT</div></div>
    <div class="ax az"></div><div class="ax ax2"></div><div class="z">Z</div><div class="x">X</div>`;
  }
}

class FusPalette extends Comp {
  markup() {
    return `<style>
      :host { display: flex; flex-direction: column; align-items: center; position: absolute; left: 1340px; top: 169px; width: 26px; height: 174px; background: #f0f0f0; font-size: 10.5px; color: #555; }
      .top { align-self: stretch; height: 17px; background: #e3e3e3; display: flex; align-items: center; justify-content: center; }
      .t { writing-mode: vertical-rl; margin-top: 1px; flex: 1; white-space: nowrap; }
      .bot { align-self: stretch; height: 10px; background: #cfcfcf; }
    </style><div class="top"><svg width="9" height="7"><path d="M4 0v7L0 3.5zM9 0v7L5 3.5z" fill="#444"/></svg></div>
    <div class="t">SKETCH PALETTE</div><div class="bot"></div>`;
  }
}

class FusTimeline extends Comp {
  markup() {
    return `<style>
      :host { display: flex; align-items: center; flex: none; height: 50px; box-sizing: border-box; background: #f0f0f0; border-top: 2px solid #cfcfcf; padding-left: 11px; }
      span { display: block; }
      .g { margin-left: auto; margin-right: 13px; }
    </style>
    <span>${iconSvg('tl-first')}</span><span style="margin-left:12px">${iconSvg('tl-prev')}</span><span style="margin-left:13px">${iconSvg('tl-play')}</span>
    <span style="margin-left:12px">${iconSvg('tl-next')}</span><span style="margin-left:13px">${iconSvg('tl-last')}</span>
    <span class="g">${iconSvg('cog')}</span>`;
  }
}

class FusTaskbar extends Comp {
  markup() {
    const apps = [
      ['w-windows', 47.5], ['w-search', 48.5], ['w-task', 49], ['w-word', 50.5, 'open'], ['w-edge', 49], ['w-files', 48.5],
      ['w-store', 50], ['w-mail', 49, 'badge'], ['w-chrome', 49, 'open'], ['w-fusion', 45, 'open on'], ['w-photos', 50, 'open ph']
    ];
    const cells = apps.map(([n, w, cls = '']) => `<div class="cell ${cls}" style="width:${w}px">${iconSvg(n)}${cls === 'badge' ? '<div class="bd">1</div>' : ''}</div>`).join('');
    return `<style>
      :host { display: flex; align-items: stretch; flex: none; height: 40px; color: #fff; font-size: 12px; background: linear-gradient(90deg, #1b1c1e 0, #2a1b20 190px, #251b20 300px, #1d1d20 560px, #1c1e20 900px, #222426 1250px, #1a1c1e 1366px); }
      .cell { flex: none; display: flex; align-items: center; justify-content: center; position: relative; box-sizing: border-box; }
      .cell.on { background: rgba(255,255,255,.16); }
      .cell.open::after { content: ''; position: absolute; left: 5px; right: 5px; bottom: 0; height: 2px; background: #f4b4d6; }
      .cell.on::after { left: 0; right: 0; }
      .cell.ph { margin-left: 3px; }
      .bd { position: absolute; left: 26px; top: 19px; width: 15px; height: 15px; border-radius: 50%; background: #333; border: 1.5px solid #999; font: 700 10px/15px "Liberation Sans", sans-serif; text-align: center; }
      .tray { margin-left: auto; display: flex; align-items: center; position: relative; }
      .lang { margin-left: 11px; font-size: 12px; }
      .clock { margin-left: 14px; margin-top: 1px; width: 60px; text-align: center; font-size: 11.5px; line-height: 18px; white-space: nowrap; }
      .note { margin-left: 17px; margin-right: 25px; position: relative; }
      .note .bd { left: 7px; top: 6px; width: 15px; height: 15px; background: #26282a; }
      span { display: block; }
    </style>
    ${cells}
    <div class="tray">
      <span>${iconSvg('t-people')}</span><span style="margin-left:20px">${iconSvg('t-chev')}</span>
      <span style="margin-left:9px">${iconSvg('t-net')}</span><span style="margin-left:8px">${iconSvg('t-vol')}</span>
      <div class="lang">ESP</div>
      <div class="clock">18:29<br>29/03/2019</div>
      <div class="note">${iconSvg('t-note')}<div class="bd">9</div></div>
    </div>`;
  }
}

customElements.define('fus-app', FusApp);
customElements.define('fus-titlebar', FusTitlebar);
customElements.define('fus-tabbar', FusTabbar);
customElements.define('fus-banner', FusBanner);
customElements.define('fus-workspace', FusWorkspace);
customElements.define('fus-canvas', FusCanvas);
customElements.define('fus-toolbar', FusToolbar);
customElements.define('fus-model-group', FusModelGroup);
customElements.define('fus-tool-group', FusToolGroup);
customElements.define('fus-panel-header', FusPanelHeader);
customElements.define('fus-browser', FusBrowser);
customElements.define('fus-menu', FusMenu);
customElements.define('fus-menu-sep', FusMenuSep);
customElements.define('fus-menu-item', FusMenuItem);
customElements.define('fus-tooltip', FusTooltip);
customElements.define('fus-navbar', FusNavbar);
customElements.define('fus-viewcube', FusViewcube);
customElements.define('fus-palette', FusPalette);
customElements.define('fus-timeline', FusTimeline);
customElements.define('fus-taskbar', FusTaskbar);
</script>
</body>
</html>
